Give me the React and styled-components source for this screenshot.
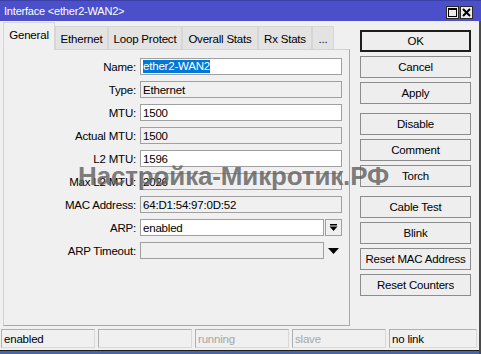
import React from 'react'
import styled, { createGlobalStyle } from 'styled-components'

const Global = createGlobalStyle`
  html, body { margin: 0; padding: 0; background: #f0f0f0; }
  * { box-sizing: border-box; }
`

const Window = styled.div`
  position: relative;
  width: 481px;
  height: 354px;
  overflow: hidden;
  background: #f0f0f0;
  display: flex;
  flex-direction: column;
  font-family: "Liberation Sans", Arial, sans-serif;
  font-size: 11px;
  letter-spacing: -0.2px;
  color: #000;
`

const TitleBar = styled.div`
  height: 21px;
  background: #4b4fc9;
  border-top: 1px solid #3b3fa8;
  display: flex;
  align-items: center;
  padding-left: 4px;
  color: #fff;
  font-size: 11px;
`

const TitleButtons = styled.div`
  margin-left: auto;
  margin-right: 8px;
  display: flex;
  gap: 1px;
  align-self: flex-end;
  padding-bottom: 2px;
`

const TitleButton = styled.div`
  width: 13px;
  height: 13px;
  background: #ececec;
  border: 1px solid #2a2a2a;
  display: flex;
  align-items: center;
  justify-content: center;
`

const Frame = styled.div`
  flex: 1;
  display: flex;
  flex-direction: column;
  border-right: 2px solid #4a4a4a;
`

const Main = styled.div`
  display: flex;
  padding-top: 1px;
`

const Left = styled.div`
  margin-left: 3px;
  width: 347px;
  display: flex;
  flex-direction: column;
`

const TabRow = styled.div`
  height: 27px;
  display: flex;
  align-items: flex-end;
`

const Tab = styled.div`
  width: ${p => p.w}px;
  height: ${p => (p.active ? 28 : 23)}px;
  margin-bottom: ${p => (p.active ? -1 : 0)}px;
  position: relative;
  z-index: ${p => (p.active ? 1 : 0)};
  background: ${p => (p.active ? '#f0f0f0' : '#e3e3e3')};
  border: 1px solid #d6d6d6;
  border-bottom: none;
  display: flex;
  align-items: center;
  justify-content: center;
  padding-top: ${p => (p.active ? 0 : 1)}px;
  padding-bottom: ${p => (p.active ? 3 : 0)}px;
  font-size: 11.5px;
`

const Panel = styled.div`
  height: 277px;
  border: 1px solid #a8a8a8;
  border-top-color: #d2d2d2;
  border-left-color: #d2d2d2;
  padding-top: 8px;
  display: grid;
  grid-template-columns: 132px 202px;
  column-gap: 4px;
  row-gap: 6px;
  align-content: start;
`

const Label = styled.div`
  height: 17px;
  display: flex;
  align-items: center;
  justify-content: flex-end;
  font-size: 11.5px;
`

const FieldRow = styled.div`
  display: flex;
  gap: 1px;
`

const Field = styled.div`
  width: ${p => p.w || 202}px;
  height: 17px;
  border: 1px solid #a0a0a0;
  background: ${p => (p.readOnly ? '#f0f0f0' : '#fff')};
  padding-left: 2px;
  display: flex;
  align-items: center;
  font-size: 11.5px;
  white-space: nowrap;
`

const Selected = styled.span`
  background: #0078d7;
  color: #fff;
  line-height: 13px;
`

const DropButton = styled.div`
  width: 17px;
  height: 17px;
  border: ${p => (p.plain ? 'none' : '1px solid #a0a0a0')};
  background: #f0f0f0;
  display: flex;
  align-items: center;
  justify-content: center;
`

const Right = styled.div`
  margin-left: 10px;
  width: 111px;
  padding-top: 8px;
  display: flex;
  flex-direction: column;
  gap: 4px;
`

const Button = styled.div`
  height: 22px;
  border: ${p => (p.primary ? '2px solid #1e1e1e' : '1px solid #8c8c8c')};
  background: #eeeeee;
  display: flex;
  align-items: center;
  justify-content: center;
  margin-top: ${p => (p.group ? 5 : 0)}px;
  font-size: 11.5px;
`

const StatusBar = styled.div`
  margin-top: 3px;
  padding-left: 1px;
  height: 19px;
  display: flex;
  gap: 3px;
`

const StatusCell = styled.div`
  width: ${p => p.w}px;
  height: 19px;
  border: 1px solid #b0b0b0;
  border-bottom-color: #d8d8d8;
  border-right-color: #d8d8d8;
  padding-left: 2px;
  display: flex;
  align-items: center;
  color: ${p => (p.dim ? '#a6a6a6' : '#000')};
  font-size: 11.5px;
`

const BottomEdge = styled.div`
  margin-top: 2px;
  height: 4px;
  border-top: 1px solid #1e1e1e;
  background: #4a64a8;
`

const Watermark = styled.div`
  position: absolute;
  left: 78px;
  top: 161px;
  font-size: 26px;
  font-weight: bold;
  letter-spacing: -0.15px;
  color: rgba(92, 92, 92, 0.8);
  pointer-events: none;
  white-space: nowrap;
`

const tabs = [
  { name: 'General', w: 52, active: true },
  { name: 'Ethernet', w: 53 },
  { name: 'Loop Protect', w: 74 },
  { name: 'Overall Stats', w: 76 },
  { name: 'Rx Stats', w: 54 },
  { name: '...', w: 22 },
]

const buttons = [
  { name: 'OK', primary: true },
  { name: 'Cancel' },
  { name: 'Apply' },
  { name: 'Disable', group: true },
  { name: 'Comment' },
  { name: 'Torch' },
  { name: 'Cable Test', group: true },
  { name: 'Blink' },
  { name: 'Reset MAC Address' },
  { name: 'Reset Counters' },
]

const status = [
  { text: 'enabled', w: 94 },
  { text: '', w: 94 },
  { text: 'running', w: 94, dim: true },
  { text: 'slave', w: 94, dim: true },
  { text: 'no link', w: 88 },
]

function DropIcon() {
  return (
    <svg width="9" height="9" viewBox="0 0 9 9">
      <rect x="1" y="1" width="7" height="1.5" fill="#000" />
      <polygon points="0.5,3.5 8.5,3.5 4.5,8" fill="#000" />
    </svg>
  )
}

function DownIcon() {
  return (
    <svg width="11" height="6" viewBox="0 0 11 6">
      <polygon points="0,0 11,0 5.5,6" fill="#000" />
    </svg>
  )
}

export default function App() {
  return (
    <Window>
      <Global />
      <TitleBar>
        Interface &lt;ether2-WAN2&gt;
        <TitleButtons>
          <TitleButton>
            <svg width="9" height="9" viewBox="0 0 9 9">
              <rect x="0.5" y="0.5" width="8" height="8" fill="none" stroke="#000" />
              <rect x="0.5" y="0.5" width="8" height="1.5" fill="#000" />
            </svg>
          </TitleButton>
          <TitleButton>
            <svg width="9" height="9" viewBox="0 0 9 9">
              <path d="M1 1 L8 8 M8 1 L1 8" stroke="#000" strokeWidth="2" />
            </svg>
          </TitleButton>
        </TitleButtons>
      </TitleBar>
      <Frame>
        <Main>
          <Left>
            <TabRow>
              {tabs.map(t => (
                <Tab key={t.name} w={t.w} active={t.active}>
                  {t.name}
                </Tab>
              ))}
            </TabRow>
            <Panel>
              <Label>Name:</Label>
              <Field>
                <Selected>ether2-WAN2</Selected>
              </Field>
              <Label>Type:</Label>
              <Field readOnly>Ethernet</Field>
              <Label>MTU:</Label>
              <Field>1500</Field>
              <Label>Actual MTU:</Label>
              <Field readOnly>1500</Field>
              <Label>L2 MTU:</Label>
              <Field>1596</Field>
              <Label>Max L2 MTU:</Label>
              <Field readOnly>2026</Field>
              <Label>MAC Address:</Label>
              <Field readOnly>64:D1:54:97:0D:52</Field>
              <Label>ARP:</Label>
              <FieldRow>
                <Field w={184}>enabled</Field>
                <DropButton>
                  <DropIcon />
                </DropButton>
              </FieldRow>
              <Label>ARP Timeout:</Label>
              <FieldRow>
                <Field w={184} readOnly />
                <DropButton plain>
                  <DownIcon />
                </DropButton>
              </FieldRow>
            </Panel>
          </Left>
          <Right>
            {buttons.map(b => (
              <Button key={b.name} primary={b.primary} group={b.group}>
                {b.name}
              </Button>
            ))}
          </Right>
        </Main>
        <StatusBar>
          {status.map((s, i) => (
            <StatusCell key={i} w={s.w} dim={s.dim}>
              {s.text}
            </StatusCell>
          ))}
        </StatusBar>
        <BottomEdge />
      </Frame>
      <Watermark>Настройка-Микротик.РФ</Watermark>
    </Window>
  )
}
